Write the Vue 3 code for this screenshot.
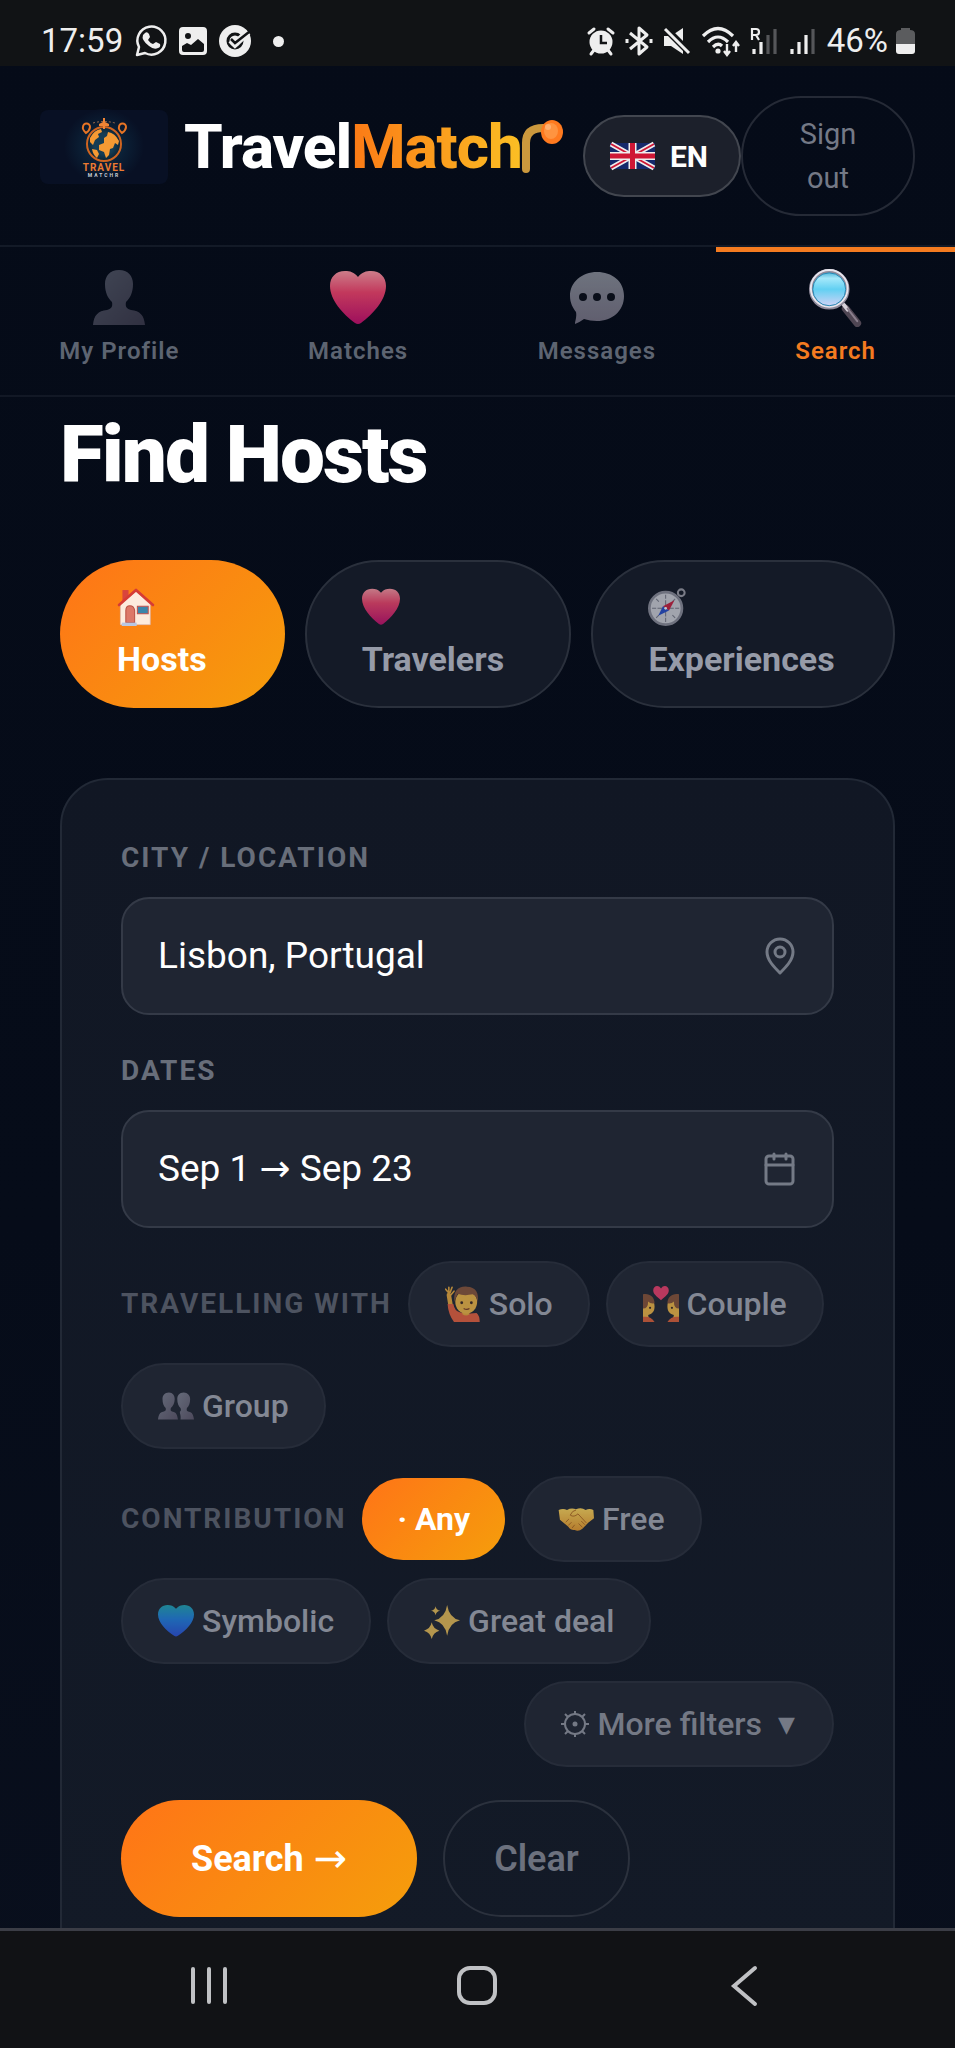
<script setup>
import { ref } from 'vue'

const navItems = [
  { id: 'profile', label: 'My Profile', icon: 'person' },
  { id: 'matches', label: 'Matches', icon: 'heart' },
  { id: 'messages', label: 'Messages', icon: 'bubble' },
  { id: 'search', label: 'Search', icon: 'magnifier' },
]
const modes = [
  { id: 'hosts', label: 'Hosts', icon: 'house' },
  { id: 'travelers', label: 'Travelers', icon: 'heart' },
  { id: 'experiences', label: 'Experiences', icon: 'compass' },
]
const parties = [
  { id: 'solo', label: 'Solo', icon: 'solo' },
  { id: 'couple', label: 'Couple', icon: 'couple' },
  { id: 'group', label: 'Group', icon: 'group' },
]
const contributions = [
  { id: 'any', label: '· Any' },
  { id: 'free', label: 'Free', icon: 'hands' },
  { id: 'symbolic', label: 'Symbolic', icon: 'blueheart' },
  { id: 'deal', label: 'Great deal', icon: 'sparkles' },
]
const page = ref('search')
const mode = ref('hosts')
const party = ref('')
const contribution = ref('any')
const city = ref('Lisbon, Portugal')
const dates = ref('Sep 1 → Sep 23')

function clearAll() {
  city.value = ''
  dates.value = ''
  party.value = ''
  contribution.value = 'any'
}
</script>

<template>
  <div class="screen">
    <svg class="sprite" width="0" height="0" aria-hidden="true">
      <defs>
        <linearGradient id="gHeart" x1="0" y1="0" x2="0" y2="1"><stop offset="0" stop-color="#ff9aa6" /><stop offset=".4" stop-color="#f2456e" /><stop offset="1" stop-color="#c4116f" /></linearGradient>
        <linearGradient id="gBlue" x1="0" y1="0" x2="0" y2="1"><stop offset="0" stop-color="#1fa6b4" /><stop offset=".45" stop-color="#1f7fe0" /><stop offset="1" stop-color="#2a50d8" /></linearGradient>
        <linearGradient id="gPerson" x1="0" y1="0" x2="1" y2="1"><stop offset="0" stop-color="#7d8292" /><stop offset="1" stop-color="#5c566a" /></linearGradient>
        <linearGradient id="gBubble" x1="0" y1="0" x2="0" y2="1"><stop offset="0" stop-color="#b4b8c2" /><stop offset="1" stop-color="#9c95a8" /></linearGradient>
        <linearGradient id="gLens" x1="0" y1="0" x2="0" y2="1"><stop offset="0" stop-color="#3aa9d0" /><stop offset=".2" stop-color="#a5e8fa" /><stop offset=".5" stop-color="#62d0f2" /><stop offset="1" stop-color="#dcd3f6" /></linearGradient>
        <linearGradient id="gHand" x1="0" y1="0" x2="0" y2="1"><stop offset="0" stop-color="#ffd75c" /><stop offset="1" stop-color="#e89a2c" /></linearGradient>
      </defs>
      <symbol id="person" viewBox="0 0 56 56">
        <path fill="url(#gPerson)" d="M28 0C19 0 14 6 14 14c0 9 3 14 7 18 1 5-1 7-5 8C7 41 3 45 2 55h52c-1-10-5-14-14-15-4-1-6-3-5-8 4-4 7-9 7-18C42 6 37 0 28 0Z" />
      </symbol>
      <symbol id="heart" viewBox="0 0 56 56">
        <path fill="url(#gHeart)" d="M28 7C24 2 20 1 15 1 6 1 0 7 0 16c0 14 13 28 25 37q3 2 6 0c12-9 25-23 25-37C56 7 50 1 41 1c-5 0-9 1-13 6Z" />
      </symbol>
      <symbol id="blueheart" viewBox="0 0 56 56">
        <path fill="url(#gBlue)" d="M28 9C24 4 20 3 15 3 6 3 0 9 0 18c0 13 13 25 25 33q3 2 6 0c12-8 25-20 25-33C56 9 50 3 41 3c-5 0-9 1-13 6Z" />
      </symbol>
      <symbol id="bubble" viewBox="0 0 56 56">
        <path fill="url(#gBubble)" d="M28 2C13 2 1 12 1 26c0 7 3 12 6 16 1 5-1 9-1 12q5-2 9-5c4 1 8 2 13 2 15 0 27-10 27-25S43 2 28 2Z" />
        <g fill="#0d111b"><circle cx="14" cy="27" r="4" /><circle cx="28" cy="27" r="4" /><circle cx="42" cy="27" r="4" /></g>
      </symbol>
      <symbol id="magnifier" viewBox="0 0 56 60">
        <path d="m38 41 12 15" stroke="#4f4653" stroke-width="8" stroke-linecap="round" />
        <path d="m36 37 4 5" stroke="#d7d2da" stroke-width="4" stroke-linecap="round" />
        <path d="m40 41 10 13" stroke="#8a7f8d" stroke-width="2" stroke-linecap="round" />
        <circle cx="21" cy="21" r="19" fill="url(#gLens)" stroke="#8f8a9a" stroke-width="4" />
        <circle cx="21" cy="20" r="19" fill="none" stroke="#e8e6ee" stroke-width="2" />
        <circle cx="21" cy="21" r="17" fill="none" stroke="#2488b4" stroke-width="1" />
      </symbol>
      <symbol id="house" viewBox="0 0 56 56">
        <path fill="#d9453d" d="M8 3h9v16H8z" />
        <path fill="#fdebdd" stroke="#d8b8b6" stroke-width="1" d="M5 24 28 5l21 19v30H5Z" />
        <path fill="none" stroke="#d63b35" stroke-width="4" stroke-linecap="round" stroke-linejoin="round" d="M3 25 28 3l25 22" />
        <path fill="#dd7868" stroke="#b95145" stroke-width="1.5" d="M13 51V33q0-7 6-7t7 7v18Z" />
        <path fill="#3b86ab" stroke="#c4524d" stroke-width="1.5" d="M30 27h16v11H30z" />
        <path fill="#b9c7e2" d="M7 51h22v5H7z" />
      </symbol>
      <symbol id="compass" viewBox="0 0 56 56">
        <circle cx="49" cy="7" r="5" fill="none" stroke="#9c9da7" stroke-width="3" />
        <circle cx="26" cy="30" r="24" fill="#d0d2da" stroke="#8d8f9c" stroke-width="4" />
        <g stroke="#7a7d8b" stroke-width="1.5"><path d="M26 10v6M26 44v6M6 30h6M40 30h6M12 16l4 4M36 40l4 4M12 44l4-4M36 20l4-4" /><path d="M26 18v24M14 30h24" /></g>
        <path fill="#ca2342" d="m39 18-8 15-9-6Z" /><path fill="#2850cc" d="m15 41 7-14 9 6Z" /><circle cx="26" cy="30" r="2" fill="#fff" />
      </symbol>
      <symbol id="solo" viewBox="0 0 56 56">
        <path fill="none" stroke="#e9a93d" stroke-width="7" stroke-linecap="round" d="M6 14 9 32" />
        <path fill="none" stroke="#e9a93d" stroke-width="2.5" stroke-linecap="round" d="M6 11 1 5M6 10V2M8 10l3-8M9 14l5-6" />
        <path fill="#e6603f" d="M4 28h9q2 11 10 13l12 2 14-1q5 4 5 14H14Q5 44 4 28Z" />
        <path fill="#e9a93d" d="M27 38h11v6q-5 4-11 0z" /><ellipse cx="33" cy="25" rx="17" ry="18" fill="#efb747" />
        <path fill="#87543a" d="M15 25C12 9 20 0 34 1c14 0 19 10 17 24q-1-9-8-12-14 3-23-1-4 5-5 13Z" />
        <circle cx="26" cy="26" r="2.2" fill="#402a22" /><circle cx="41" cy="26" r="2.2" fill="#402a22" /><path d="M29 35q5 3 9 0" fill="none" stroke="#7c3d23" stroke-width="2" />
      </symbol>
      <symbol id="couple" viewBox="0 0 56 56">
        <path fill="#ed3f6d" d="M28 4c-4-7-13-4-12 4 1 6 8 10 12 14 4-4 11-8 12-14 1-8-8-11-12-4Z" />
        <path fill="#efb747" d="M0 18c13 0 18 4 18 14 0 8-4 12-10 13l1 5H0z" /><path fill="#efb747" d="M56 18c-13 0-18 4-18 14 0 8 4 12 10 13l-1 5h9z" />
        <path fill="#875338" d="M0 13c10-2 18 4 18 14q-7 1-10-3 0 11-8 11Z" /><path fill="#875338" d="M56 13c-10-2-18 4-18 14q7 1 10-3 0 11 8 11Z" />
        <path fill="#dc6039" d="M0 48q12-2 18 8H0z" /><path fill="#dc6039" d="M56 48q-12-2-18 8h18z" />
        <g fill="#3a261f"><circle cx="11" cy="34" r="1.700" /><circle cx="45" cy="34" r="1.700" /></g>
      </symbol>
      <symbol id="group" viewBox="0 0 56 56">
        <path fill="url(#gPerson)" d="M17 7c-7 0-10 5-10 10 0 7 2 11 5 14 1 4-1 5-4 6-5 1-7 4-8 12h31c-1-8-3-11-8-12-3-1-4-2-3-6 3-3 6-7 6-14 0-5-3-10-9-10Z" />
        <path fill="url(#gPerson)" d="M40 7c-7 0-10 5-10 10 0 7 2 11 5 14 1 3 1 4-1 6 0 4 2 6 1 12h21c-1-8-3-11-8-12-3-1-4-2-3-6 3-3 5-7 5-14 0-5-4-10-10-10Z" />
      </symbol>
      <symbol id="hands" viewBox="0 0 56 56">
        <path fill="url(#gHand)" d="M1 14q7-3 13 0 7-4 14-1 8-4 15 1 6-3 12 0l1 13-9 7-9 9q-6 5-12 2-6 1-10-5L3 29Z" />
        <path fill="none" stroke="#b26b20" stroke-width="1.5" d="M28 14q-6 1-9 8 6 4 12-2l13 14M12 33l5-5M16 38l5-5M22 42l4-5M32 35l6 6M36 31l6 6" />
      </symbol>
      <symbol id="sparkles" viewBox="0 0 56 56">
        <g fill="#e6bc57"><path d="M36 3q3 20 20 24-17 4-20 24-3-20-20-24Q33 23 36 3Z" /><path d="M12 30q2 10 12 13-10 3-12 13-2-10-12-13 10-3 12-13Z" /><path d="M18 5q1 6 7 7-6 1-7 7-1-6-7-7 6-1 7-7Z" /></g>
      </symbol>
    </svg>

    <div class="status">
      <div class="status-side">
        <span>17:59</span>
        <svg width="32" height="32" viewBox="0 0 32 32" aria-label="WhatsApp"><path d="M2 30 4 22A14 14 0 1 1 10 28Z" fill="none" stroke="#eee" stroke-width="2.5" stroke-linejoin="round" /><path fill="#eee" d="M10 8q2-2 4 1l1 3-2 3q2 3 5 4l3-2 4 2q1 3-2 4-4 2-9-2-8-6-6-11Z" /></svg>
        <svg width="28" height="28" viewBox="0 0 28 28" aria-label="Gallery"><path fill="#eee" fill-rule="evenodd" d="M4 0h20q4 0 4 4v20q0 4-4 4H4q-4 0-4-4V4q0-4 4-4ZM3 19v4q0 2 2 2h18q2 0 2-2v-6l-6-5-7 6-4-2ZM9 6a3 3 0 1 0 0 6 3 3 0 0 0 0-6Z" /></svg>
        <svg width="32" height="32" viewBox="0 0 32 32" aria-label="Tasks"><circle cx="16" cy="16" r="16" fill="#eee" /><circle cx="16" cy="16" r="7" fill="none" stroke="#111315" stroke-width="3" /><path d="m12 15 4 4L29 7" fill="none" stroke="#eee" stroke-width="7" /><path d="m12 14 4 4L30 7" fill="none" stroke="#111315" stroke-width="2.5" /></svg>
        <i class="dot"></i>
      </div>
      <div class="status-side right">
        <svg width="26" height="28" viewBox="0 0 26 28" aria-label="Alarm"><circle cx="13" cy="15" r="11.5" fill="#eee" /><path d="M1 6 6 2M20 2l5 4M6 23l-3 4M20 23l3 4" stroke="#eee" stroke-width="3" stroke-linecap="round" /><path d="M13 8v8h6" fill="none" stroke="#111315" stroke-width="2.5" /></svg>
        <svg width="26" height="28" viewBox="0 0 26 28" aria-label="Bluetooth"><path d="m4 6 17 14-8 7V1l8 7L4 22M1 12v4M25 12v4" fill="none" stroke="#eee" stroke-width="3" stroke-linejoin="round" /></svg>
        <svg width="26" height="28" viewBox="0 0 26 28" aria-label="Muted"><path fill="#eee" d="M0 9h7L19 1v26L7 19H0Z" /><path d="m0 0 27 27" stroke="#111315" stroke-width="7" /><path d="m1 2 24 24" stroke="#eee" stroke-width="3" /></svg>
        <svg width="36" height="30" viewBox="0 0 36 30" aria-label="Wi-Fi"><path d="M1 10q15-15 30 0M6 16q10-10 20 0M11 21q5-5 9-1" fill="none" stroke="#eee" stroke-width="3.2" /><circle cx="16" cy="25" r="2.6" fill="#eee" /><path d="M25 18v10m-3-3 3 4 3-4M34 26V17m-3 3 3-4 3 4" fill="none" stroke="#eee" stroke-width="2.4" /></svg>
        <svg width="27" height="28" viewBox="0 0 27 28" aria-label="Roaming signal"><path d="M2 13V2h4q3 0 3 3T6 8H2m4 0 3 5" fill="none" stroke="#eee" stroke-width="2.2" /><path d="M4 22v5M11 15v12" stroke="#eee" stroke-width="3.2" /><path d="M18 8v19M25 2v25" stroke="#555659" stroke-width="3.2" /></svg>
        <svg width="26" height="28" viewBox="0 0 26 28" aria-label="Signal"><path d="M3 22v5M10 15v12M17 8v19" stroke="#eee" stroke-width="3.2" /><path d="M24 2v25" stroke="#555659" stroke-width="3.2" /></svg>
        <span class="battery">46%<svg width="19" height="28" viewBox="0 0 19 28" aria-label="Battery"><path fill="#5b5c5e" d="M5 3V1h9v2q5 0 5 4v10H0V7q0-4 5-4Z" /><path fill="#eee" d="M0 17h19v7q0 3-3 3H3q-3 0-3-3Z" /></svg></span>
      </div>
    </div>

    <header class="header">
      <a class="brand" href="#home">
        <svg class="logo" width="128" height="74" viewBox="0 0 128 74" aria-hidden="true">
          <defs>
            <radialGradient id="gGlow"><stop offset="0" stop-color="#12384e" /><stop offset=".5" stop-color="#0b2036" /><stop offset="1" stop-color="#081024" /></radialGradient>
            <radialGradient id="gGlobe"><stop offset=".6" stop-color="#163d54" /><stop offset="1" stop-color="#0b2334" /></radialGradient>
          </defs>
          <rect width="128" height="74" rx="8" fill="#081024" />
          <ellipse cx="64" cy="36" rx="40" ry="37" fill="url(#gGlow)" />
          <circle cx="64" cy="34" r="17" fill="url(#gGlobe)" stroke="#cf6420" stroke-width="2" />
          <path fill="#f59a33" d="M50 28q4-8 11-9l1 3-4 2 1 3-4 3-2 5-3-3Zm2 11 5 1 2 4-2 4q-4-3-5-9Zm12-11 3-2 1-4q7 1 11 9l-1 4-3-2-2 5-3 1-1 6-3 3-2-6-5-2v-5l5-2Z" />
          <path fill="none" stroke="#e77425" stroke-width="2" d="M46 23q-4-4-3-6a3 3 0 0 1 7 0q0 3-4 6ZM82 23q-4-4-3-6a3 3 0 0 1 7 0q0 3-4 6Z" />
          <path d="M53 13q11-3 22 0" fill="none" stroke="#9a6a4c" stroke-width="1" stroke-dasharray="2 2" />
          <path fill="#f08434" d="M63 8h2v4l4 2v2h-4v3h-2v-3h-4v-2l4-2Z" />
          <text x="64" y="61" text-anchor="middle" class="logo-main">TRAVEL</text>
          <text x="64" y="67" text-anchor="middle" class="logo-sub">MATCHR</text>
        </svg>
        <span class="wordmark">Travel<span class="grad">Match</span></span>
        <svg class="tail" width="44" height="56" viewBox="0 0 44 56" role="img" aria-label="r"><path d="M6 50V24Q6 9 23 9h4" fill="none" stroke="#cb983d" stroke-width="8" stroke-linecap="round" /><ellipse cx="32" cy="13" rx="11" ry="12" fill="#ff7a1f" /><ellipse cx="31" cy="12" rx="7" ry="8" fill="#ff9440" /><circle cx="28" cy="8" r="3" fill="#ffb071" /></svg>
      </a>
      <button class="lang" type="button">
        <svg width="45" height="26" viewBox="0 0 45 26" aria-hidden="true"><path fill="#15296b" d="M0 0h45v26H0z" /><path d="m1 1 43 24M44 1 1 25" stroke="#eee" stroke-width="5" /><path d="m1 1 43 24M44 1 1 25" stroke="#cf1735" stroke-width="2" /><path d="M22.500 0v26M0 13h45" stroke="#eee" stroke-width="8" /><path d="M22.500 0v26M0 13h45" stroke="#cf1735" stroke-width="5" /></svg>
        EN
      </button>
      <button class="signout" type="button">Sign out</button>
    </header>

    <nav class="tabs">
      <a v-for="n in navItems" :key="n.id" :href="'#' + n.id" :class="{ active: page === n.id }" @click="page = n.id">
        <svg width="56" height="58" :class="n.icon" aria-hidden="true"><use :href="'#' + n.icon" /></svg>
        <span>{{ n.label }}</span>
      </a>
    </nav>

    <main class="main">
      <h1>Find Hosts</h1>
      <div class="modes">
        <button v-for="m in modes" :key="m.id" type="button" :class="{ active: mode === m.id }" @click="mode = m.id">
          <span class="mode-icon"><svg width="38" height="38" aria-hidden="true"><use :href="'#' + m.icon" /></svg></span>
          <span>{{ m.label }}</span>
        </button>
      </div>

      <form class="card" @submit.prevent>
        <label for="city">CITY / LOCATION</label>
        <div class="field">
          <input id="city" v-model="city" type="text" />
          <svg width="32" height="38" viewBox="0 0 32 38" aria-hidden="true"><path d="M16 36C10 30 3 23 3 15a13 13 0 0 1 26 0c0 8-7 15-13 21Z" /><circle cx="16" cy="15" r="5" /></svg>
        </div>
        <label for="dates">DATES</label>
        <div class="field">
          <input id="dates" v-model="dates" type="text" />
          <svg width="32" height="38" viewBox="0 0 32 38" aria-hidden="true"><rect x="2" y="6" width="27" height="28" rx="3" /><path d="M2 15h27M10 4v5M22 4v5" /></svg>
        </div>

        <div class="chips" role="group" aria-labelledby="with-label">
          <span id="with-label" class="caption">TRAVELLING WITH</span>
          <button v-for="p in parties" :key="p.id" class="chip" type="button" :class="{ active: party === p.id }" @click="party = p.id">
            <svg width="36" height="36" aria-hidden="true"><use :href="'#' + p.icon" /></svg>{{ p.label }}
          </button>
        </div>
        <div class="chips second" role="group" aria-labelledby="contribution-label">
          <span id="contribution-label" class="caption">CONTRIBUTION</span>
          <button v-for="c in contributions" :key="c.id" class="chip" type="button" :class="{ active: contribution === c.id }" @click="contribution = c.id">
            <svg v-if="c.icon" width="36" height="36" :class="c.icon" aria-hidden="true"><use :href="'#' + c.icon" /></svg>{{ c.label }}
          </button>
        </div>
        <button class="chip more" type="button">
          <svg width="28" height="28" viewBox="0 0 28 28" aria-hidden="true"><circle cx="14" cy="14" r="10" fill="none" stroke="currentColor" stroke-width="2" /><circle cx="14" cy="14" r="2.500" fill="currentColor" /><path d="M14 1v4M14 23v4M0 14h4M24 14h4M4 4l3 3M21 21l3 3M4 24l3-3M21 7l3-3" stroke="currentColor" stroke-width="2" /></svg>More filters <span class="caret">▼</span>
        </button>

        <div class="actions">
          <button class="go" type="submit">Search <span class="arrow">→</span></button>
          <button class="clear" type="button" @click="clearAll">Clear</button>
        </div>
      </form>
    </main>

    <div class="sysnav">
      <button type="button" aria-label="Recent apps"><svg width="44" height="44" viewBox="0 0 44 44"><path d="M6 5v33M22 5v33M38 5v33" /></svg></button>
      <button type="button" aria-label="Home"><svg width="44" height="44" viewBox="0 0 44 44"><rect x="4" y="4" width="36" height="35" rx="11" /></svg></button>
      <button type="button" aria-label="Back"><svg width="44" height="44" viewBox="0 0 44 44"><path d="M33 4 12 22l21 18" /></svg></button>
    </div>
  </div>
</template>

<style>
html,
body {
  background: #050b18;
}
</style>

<style scoped>
.screen {
  display: flex;
  flex-direction: column;
  height: 100vh;
  background: linear-gradient(#050b18 0%, #060c19 60%, #090f1d 100%);
  color: #fff;
  font-family: Roboto, "DejaVu Sans", sans-serif;
}
.screen *,
.screen *::before {
  box-sizing: border-box;
}
.sprite {
  position: absolute;
}
svg {
  flex: none;
  overflow: visible;
}
button {
  font-family: inherit;
  cursor: pointer;
}
.status {
  display: flex;
  justify-content: space-between;
  flex: none;
  height: 66px;
  padding: 16px 40px 0 41px;
  background: #111315;
  color: #eee;
  font-size: 33px;
  line-height: 50px;
}
.status-side {
  display: flex;
  align-items: center;
  gap: 12px;
}
.battery {
  display: flex;
  align-items: center;
  gap: 8px;
}
.dot {
  width: 11px;
  height: 11px;
  margin-left: 10px;
  border-radius: 50%;
  background: #eee;
}
.header {
  display: flex;
  align-items: center;
  flex: none;
  padding: 30px 40px 29px;
  border-bottom: 2px solid #131a27;
}
.brand {
  display: flex;
  align-items: center;
  flex: 1;
  padding-bottom: 18px;
  color: #fff;
  text-decoration: none;
}
.logo {
  margin-right: 16px;
}
.logo-main {
  fill: #ec7a31;
  font-size: 10px;
  font-weight: 700;
  letter-spacing: 1px;
}
.logo-sub {
  fill: #c9ced6;
  font-size: 5px;
  font-weight: 700;
  letter-spacing: 2px;
}
.wordmark {
  font-size: 62px;
  font-weight: 800;
  line-height: 74px;
  letter-spacing: -1px;
}
.grad {
  background: linear-gradient(90deg, #fb7a16, #fbbf24);
  background-clip: text;
  color: transparent;
}
.tail {
  margin-left: -2px;
}
.lang,
.signout {
  border-radius: 60px;
}
.lang {
  display: flex;
  align-items: center;
  gap: 15px;
  height: 82px;
  padding: 0 31px 0 25px;
  border: 2px solid #42464f;
  background: #1c202b;
  color: #fff;
  font-size: 30px;
  font-weight: 700;
}
.signout {
  width: 174px;
  height: 120px;
  padding: 0 46px;
  border: 2px solid #252a36;
  background: transparent;
  color: #747986;
  font-size: 29px;
  line-height: 44px;
}
.tabs {
  display: grid;
  grid-template-columns: repeat(4, 1fr);
  flex: none;
  border-bottom: 2px solid #121825;
}
.tabs a {
  display: flex;
  flex-direction: column;
  align-items: center;
  gap: 8px;
  height: 148px;
  padding-top: 17px;
  border-top: 5px solid transparent;
  color: #5d6471;
  font-size: 24px;
  font-weight: 600;
  line-height: 32px;
  letter-spacing: 1px;
  text-decoration: none;
}
.tabs svg {
  opacity: 0.8;
}
.tabs svg.person {
  opacity: 0.5;
}
.tabs svg.bubble {
  opacity: 0.6;
}
.tabs a.active {
  border-color: #f47b20;
  color: #f47b20;
}
.tabs a.active svg {
  opacity: 1;
}
.main {
  flex: 1;
  min-height: 0;
  overflow-y: auto;
  padding: 10px 60px 60px;
  scrollbar-width: none;
}
h1 {
  margin: 0 0 57px;
  font-size: 80px;
  font-weight: 900;
  line-height: 96px;
  letter-spacing: -2px;
}
.modes {
  display: grid;
  grid-template-columns: 225fr 267fr 304fr;
  gap: 20px;
  margin-bottom: 70px;
}
.modes button {
  display: flex;
  flex-direction: column;
  height: 148px;
  padding: 19px 0 21px 55px;
  border: 2px solid #2a303c;
  border-radius: 74px;
  background: #141a27;
  color: #969ba8;
  font-size: 34px;
  font-weight: 700;
  line-height: 52px;
  text-align: left;
}
.mode-icon {
  display: flex;
  align-items: center;
  height: 52px;
}
.modes button svg {
  opacity: 0.75;
}
.modes button.active,
.chip.active,
.go {
  border-color: transparent;
  background: linear-gradient(135deg, #ff7417, #f59e0b) border-box;
  color: #fff;
}
.modes button.active svg {
  opacity: 1;
}
.card {
  display: flex;
  flex-direction: column;
  padding: 62px 59px 60px;
  border: 2px solid #222936;
  border-radius: 48px;
  background: linear-gradient(#111724, #131a27);
}
label,
.caption {
  color: #686e7a;
  font-size: 28px;
  font-weight: 700;
  line-height: 32px;
  letter-spacing: 2px;
}
.field {
  display: flex;
  align-items: center;
  gap: 16px;
  height: 118px;
  margin: 23px 0 40px;
  padding: 0 36px 0 35px;
  border: 2px solid #343a47;
  border-radius: 28px;
  background: #1f2532;
}
.field:focus-within {
  border-color: #f47b20;
}
.field input {
  flex: 1;
  min-width: 0;
  padding: 0;
  border: 0;
  outline: 0;
  background: transparent;
  color: #fff;
  font: 37px/48px Roboto, "DejaVu Sans", sans-serif;
}
.field svg {
  fill: none;
  stroke: #747a86;
  stroke-width: 3;
  stroke-linecap: round;
  stroke-linejoin: round;
}
.chips {
  display: flex;
  flex-wrap: wrap;
  align-items: center;
  gap: 16px;
  margin-top: -7px;
}
.chips.second {
  margin-top: 27px;
}
.caption {
  color: #4d5360;
}
.chip {
  display: flex;
  align-items: center;
  gap: 8px;
  height: 86px;
  padding: 0 35px;
  border: 2px solid #262c39;
  border-radius: 43px;
  background: #1f2532;
  color: #838894;
  font-size: 32px;
  font-weight: 500;
}
.chip svg {
  opacity: 0.75;
}
.chip.active {
  height: 82px;
  padding: 0 33px;
  font-weight: 700;
}
.chip.more {
  align-self: flex-end;
  margin-top: 17px;
  color: #747985;
}
.chip.more svg {
  opacity: 1;
}
.caret {
  padding: 0 2px 0 8px;
  font-family: "DejaVu Sans", sans-serif;
  font-size: 22px;
}
.actions {
  display: flex;
  gap: 26px;
  margin-top: 33px;
}
.actions button {
  height: 117px;
  border-radius: 60px;
  font-size: 36px;
}
.go {
  display: flex;
  align-items: center;
  gap: 10px;
  padding: 0 70px;
  border: 0;
  font-weight: 700;
}
.arrow {
  font-size: 40px;
  font-weight: 400;
}
.clear {
  padding: 0 49px;
  border: 2px solid #2b313d;
  background: transparent;
  color: #6c717e;
  font-weight: 600;
}
.sysnav {
  display: flex;
  justify-content: space-between;
  align-items: center;
  flex: none;
  height: 120px;
  padding: 0 189px 8px 187px;
  border-top: 3px solid #3b3d46;
  background: #111215;
}
.sysnav button {
  display: flex;
  padding: 0;
  border: 0;
  background: transparent;
}
.sysnav svg {
  fill: none;
  stroke: #c0c1c4;
  stroke-width: 4;
  stroke-linecap: round;
}
</style>
